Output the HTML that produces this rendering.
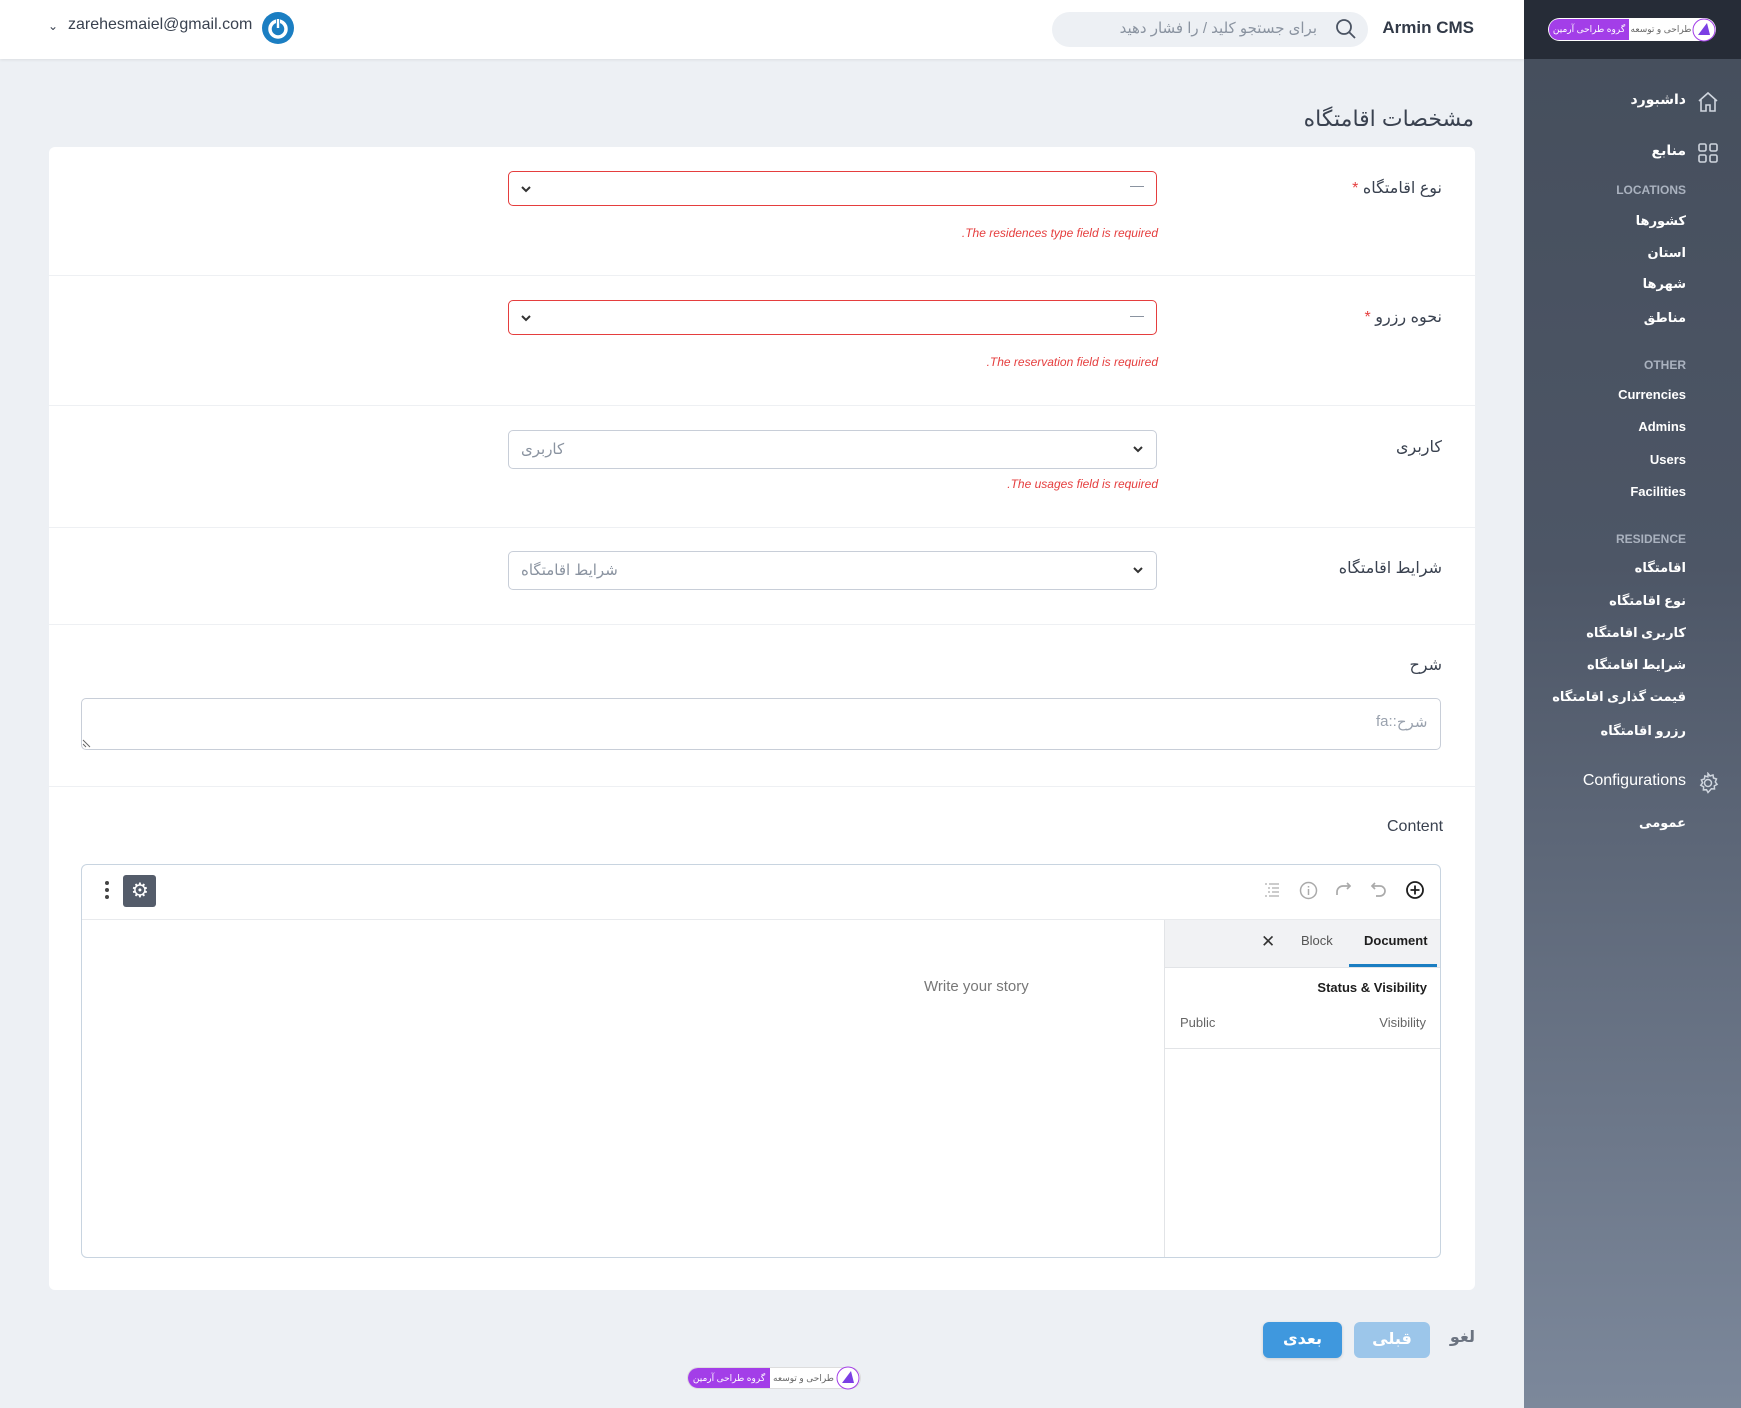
<!DOCTYPE html>
<html><head><meta charset="utf-8"><style>
*{box-sizing:border-box;margin:0;padding:0}
body{width:1741px;height:1408px;position:relative;background:#edf0f4;font-family:"Liberation Sans","DejaVu Sans",sans-serif;overflow:hidden;color:#3a4250}
.a{position:absolute}
.rt{position:absolute;direction:rtl;text-align:right;white-space:nowrap}
#hdr{left:0;top:0;width:1524px;height:59px;background:#fff;box-shadow:0 1px 3px rgba(0,0,0,.08)}
#side{left:1524px;top:0;width:217px;height:1408px;background:linear-gradient(#454e5c 0%,#4d5666 40%,#7c889b 100%)}
#sidetop{left:1524px;top:0;width:217px;height:59px;background:#262c37}
.si{color:#fff;font-size:13px;font-weight:bold;right:55px}
.sh{color:#aab2bf;font-size:12px;font-weight:bold;right:55px}
.card{left:49px;top:147px;width:1426px;height:1143px;background:#fff;border-radius:6px}
.sep{left:49px;width:1426px;height:1px;background:#eef0f3}
.lbl{font-size:16px;color:#3a4250;right:299px}
.sel{left:508px;width:649px;background:#fff;border-radius:5px}
.err{font-size:12px;color:#e53e3e;font-style:italic;right:583px}
.lg{white-space:nowrap;overflow:hidden;font-size:9px;direction:rtl;text-align:center}
</style></head><body>
<div id="hdr" class="a"></div>
<div class="a" style="left:48px;top:19px;font-size:12px;color:#3a4250">&#8964;</div>
<div class="a" style="left:68px;top:16px;font-size:16px;color:#3a4250">zarehesmaiel@gmail.com</div>
<svg class="a" style="left:262px;top:12px" width="32" height="32" viewBox="0 0 32 32"><circle cx="16" cy="16" r="16" fill="#1b7ec2"/><circle cx="16" cy="17" r="8" fill="none" stroke="#fff" stroke-width="3.5"/><rect x="14" y="6" width="4" height="11" fill="#1b7ec2"/><rect x="14.8" y="7" width="2.4" height="9" fill="#fff"/></svg>
<div class="a" style="left:1052px;top:12px;width:316px;height:35px;background:#edf0f4;border-radius:18px"></div>
<svg class="a" style="left:1335px;top:18px" width="22" height="22" viewBox="0 0 22 22"><circle cx="9" cy="9" r="7" fill="none" stroke="#4a5362" stroke-width="1.8"/><path d="M14 14l6 6" stroke="#4a5362" stroke-width="1.8"/></svg>
<div class="rt" style="right:424px;top:19px;font-size:15px;color:#8a93a0">برای جستجو کلید / را فشار دهید</div>
<div class="rt" style="right:267px;top:18px;font-size:17px;font-weight:bold;color:#323a48">Armin CMS</div>

<div id="side" class="a"></div><div id="sidetop" class="a"></div>
<div class="a" style="left:1548px;top:18px;width:168px;height:23px;border-radius:12px;background:#fff"></div>
<div class="a lg" style="left:1549px;top:19px;width:80px;height:21px;border-radius:10px 0 0 10px;background:#a33ee8;color:#fff;line-height:21px">گروه طراحی آرمین</div>
<div class="a lg" style="left:1630px;top:19px;width:62px;height:21px;color:#666;line-height:21px">طراحی و توسعه</div>
<svg class="a" style="left:1692px;top:18px" width="24" height="24" viewBox="0 0 24 24"><circle cx="12" cy="12" r="11" fill="#fff" stroke="#a33ee8"/><path d="M6 17L15 5 18 17Z" fill="#7b3fe4"/></svg>

<svg class="a" style="left:1697px;top:91px" width="22" height="22" viewBox="0 0 22 22" fill="none" stroke="#cfd5de" stroke-width="1.6"><path d="M2 10L11 2l9 8M4 8v12h5v-6h4v6h5V8"/></svg>
<div class="rt si" style="top:91px;font-size:14px">داشبورد</div>
<svg class="a" style="left:1698px;top:143px" width="20" height="20" viewBox="0 0 20 20" fill="none" stroke="#cfd5de" stroke-width="1.6"><rect x="1" y="1" width="7" height="7" rx="1.5"/><rect x="12" y="1" width="7" height="7" rx="1.5"/><rect x="1" y="12" width="7" height="7" rx="1.5"/><rect x="12" y="12" width="7" height="7" rx="1.5"/></svg>
<div class="rt si" style="top:142px;font-size:14px">منابع</div>
<div class="rt sh" style="top:183px">LOCATIONS</div>
<div class="rt si" style="top:213px">کشورها</div>
<div class="rt si" style="top:245px">استان</div>
<div class="rt si" style="top:276px">شهرها</div>
<div class="rt si" style="top:310px">مناطق</div>
<div class="rt sh" style="top:358px">OTHER</div>
<div class="rt si" style="top:387px">Currencies</div>
<div class="rt si" style="top:419px">Admins</div>
<div class="rt si" style="top:452px">Users</div>
<div class="rt si" style="top:484px">Facilities</div>
<div class="rt sh" style="top:532px">RESIDENCE</div>
<div class="rt si" style="top:560px">اقامتگاه</div>
<div class="rt si" style="top:593px">نوع اقامتگاه</div>
<div class="rt si" style="top:625px">کاربری اقامتگاه</div>
<div class="rt si" style="top:657px">شرایط اقامتگاه</div>
<div class="rt si" style="top:689px">قیمت گذاری اقامتگاه</div>
<div class="rt si" style="top:723px">رزرو اقامتگاه</div>
<svg class="a" style="left:1697px;top:772px" width="22" height="22" viewBox="0 0 22 22" fill="none" stroke="#cfd5de" stroke-width="1.5"><circle cx="11" cy="11" r="3.5"/><path d="M11 1.5l2 2.5 3-1 .5 3 3 1-1.2 2.9 1.8 2.5-2.8 1.5.2 3.1-3.1-.2L11 20.5l-1.5-2.8-3.1.2.2-3.1L3.8 13.3l1.8-2.5L4.4 7.9l3-1 .5-3 3 1z"/></svg>
<div class="rt si" style="top:772px;font-size:16px;font-weight:normal">Configurations</div>
<div class="rt si" style="top:815px">عمومی</div>

<div class="rt" style="right:267px;top:106px;font-size:22px;color:#3a4250">مشخصات اقامتگاه</div>
<div class="a card"></div>
<div class="a sep" style="top:275px"></div>
<div class="a sep" style="top:405px"></div>
<div class="a sep" style="top:527px"></div>
<div class="a sep" style="top:624px"></div>
<div class="a sep" style="top:786px"></div>

<div class="rt lbl" style="top:178px">نوع اقامتگاه <span style="color:#e53e3e">*</span></div>
<div class="a sel" style="top:171px;height:35px;border:1px solid #e53e3e"></div>
<div class="a" style="left:1130px;top:186px;width:14px;height:1px;background:#8a93a0"></div>
<svg class="a" style="left:520px;top:184px" width="12" height="10" viewBox="0 0 12 10"><path d="M2 3l4 4 4-4" fill="none" stroke="#333" stroke-width="2"/></svg>
<div class="rt err" style="top:226px">The residences type field is required.</div>

<div class="rt lbl" style="top:307px">نحوه رزرو <span style="color:#e53e3e">*</span></div>
<div class="a sel" style="top:300px;height:35px;border:1px solid #e53e3e"></div>
<div class="a" style="left:1130px;top:316px;width:14px;height:1px;background:#8a93a0"></div>
<svg class="a" style="left:520px;top:313px" width="12" height="10" viewBox="0 0 12 10"><path d="M2 3l4 4 4-4" fill="none" stroke="#333" stroke-width="2"/></svg>
<div class="rt err" style="top:355px">The reservation field is required.</div>

<div class="rt lbl" style="top:437px">کاربری</div>
<div class="a sel" style="top:430px;height:39px;border:1px solid #c8ced8"></div>
<div class="a" style="left:521px;top:440px;font-size:15px;color:#8a93a0;white-space:nowrap">کاربری</div>
<svg class="a" style="left:1132px;top:444px" width="12" height="10" viewBox="0 0 12 10"><path d="M2 3l4 4 4-4" fill="none" stroke="#333" stroke-width="2"/></svg>
<div class="rt err" style="top:477px">The usages field is required.</div>

<div class="rt lbl" style="top:558px">شرایط اقامتگاه</div>
<div class="a sel" style="top:551px;height:39px;border:1px solid #c8ced8"></div>
<div class="a" style="left:521px;top:561px;font-size:15px;color:#8a93a0;white-space:nowrap">شرایط اقامتگاه</div>
<svg class="a" style="left:1132px;top:565px" width="12" height="10" viewBox="0 0 12 10"><path d="M2 3l4 4 4-4" fill="none" stroke="#333" stroke-width="2"/></svg>

<div class="rt lbl" style="top:655px">شرح</div>
<div class="a" style="left:81px;top:698px;width:1360px;height:52px;border:1px solid #c8ced8;border-radius:5px"></div>
<div class="a" style="left:1376px;top:713px;font-size:15px;color:#9aa2ae;display:flex;direction:ltr;white-space:nowrap"><span>fa::</span><span>شرح</span></div>
<svg class="a" style="left:82px;top:738px" width="10" height="10"><path d="M1 2l7 7M1 6l3 3" stroke="#666"/></svg>

<div class="a" style="left:1387px;top:818px;font-size:16px;color:#3a4250">Content</div>
<div class="a" style="left:81px;top:864px;width:1360px;height:394px;border:1px solid #c8d4e0;border-radius:6px"></div>
<div class="a" style="left:82px;top:919px;width:1358px;height:1px;background:#e8eaed"></div>
<div class="a" style="left:1164px;top:920px;width:1px;height:337px;background:#e2e4e7"></div>
<div class="a" style="left:1165px;top:920px;width:275px;height:48px;background:#f1f2f4;border-bottom:1px solid #e2e4e7"></div>
<div class="a" style="left:1349px;top:964px;width:88px;height:3px;background:#1b7ec2"></div>
<div class="a" style="left:1364px;top:933px;font-size:13px;font-weight:bold;color:#1e1e1e">Document</div>
<div class="a" style="left:1301px;top:933px;font-size:13px;color:#555">Block</div>
<div class="a" style="left:1261px;top:932px;font-size:17px;color:#333">✕</div>
<div class="rt" style="right:314px;top:980px;font-size:13px;font-weight:bold;color:#1e1e1e">Status &amp; Visibility</div>
<div class="a" style="left:1180px;top:1015px;font-size:13px;color:#666">Public</div>
<div class="rt" style="right:315px;top:1015px;font-size:13px;color:#666">Visibility</div>
<div class="a" style="left:1165px;top:1048px;width:275px;height:1px;background:#e2e4e7"></div>
<div class="a" style="left:924px;top:978px;font-size:15px;color:#777">Write your story</div>

<div class="a" style="left:105px;top:881px;width:4px;height:4px;border-radius:2px;background:#444;box-shadow:0 7px 0 #444,0 14px 0 #444"></div>
<div class="a" style="left:123px;top:875px;width:33px;height:32px;background:#545c6a;border-radius:3px"></div>
<div class="a" style="left:130px;top:878px;width:20px;font-size:20px;color:#fff;text-align:center">⚙</div>
<svg class="a" style="left:1405px;top:880px" width="20" height="20" viewBox="0 0 20 20" fill="none" stroke="#1e1e1e" stroke-width="1.8"><circle cx="10" cy="10" r="8"/><path d="M10 5.5v9M5.5 10h9"/></svg>
<svg class="a" style="left:1370px;top:881px" width="18" height="18" viewBox="0 0 18 18" fill="none" stroke="#aaa" stroke-width="1.7"><path d="M5 2L2 5l3 3"/><path d="M2 5h8a5 5 0 010 10H6"/></svg>
<svg class="a" style="left:1334px;top:881px" width="18" height="18" viewBox="0 0 18 18" fill="none" stroke="#aaa" stroke-width="1.7"><path d="M13 2l3 3-3 3"/><path d="M16 5H9a6 6 0 00-6 6v3"/></svg>
<svg class="a" style="left:1299px;top:881px" width="19" height="19" viewBox="0 0 19 19" fill="none" stroke="#aaa" stroke-width="1.5"><circle cx="9.5" cy="9.5" r="8"/><path d="M9.5 8v6M9.5 5v1.5"/></svg>
<svg class="a" style="left:1264px;top:883px" width="16" height="14" viewBox="0 0 16 14" fill="none" stroke="#bbb" stroke-width="1.4"><path d="M1 1h2M5 1h10M4 5h2M8 5h7M4 9h2M8 9h7M1 13h2M5 13h10"/></svg>

<div class="rt" style="right:266px;top:1327px;font-size:16px;font-weight:bold;color:#6b7380">لغو</div>
<div class="a" style="left:1354px;top:1322px;width:76px;height:36px;border-radius:6px;background:#9cc6ea;color:#fff;font-size:16px;font-weight:bold;text-align:center;line-height:36px">قبلی</div>
<div class="a" style="left:1263px;top:1322px;width:79px;height:36px;border-radius:6px;background:#3f98de;color:#fff;font-size:16px;font-weight:bold;text-align:center;line-height:36px;box-shadow:0 1px 3px rgba(0,0,0,.15)">بعدی</div>

<div class="a" style="left:687px;top:1367px;width:174px;height:22px;border-radius:11px;background:#fff;border:1px solid #ddd"></div>
<div class="a lg" style="left:688px;top:1368px;width:82px;height:20px;border-radius:10px 0 0 10px;background:#a33ee8;color:#fff;line-height:20px">گروه طراحی آرمین</div>
<div class="a lg" style="left:771px;top:1368px;width:65px;height:20px;color:#666;line-height:20px">طراحی و توسعه</div>
<svg class="a" style="left:836px;top:1366px" width="24" height="24" viewBox="0 0 24 24"><circle cx="12" cy="12" r="11" fill="#fff" stroke="#a33ee8"/><path d="M6 17L15 5 18 17Z" fill="#7b3fe4"/></svg>
</body></html>
